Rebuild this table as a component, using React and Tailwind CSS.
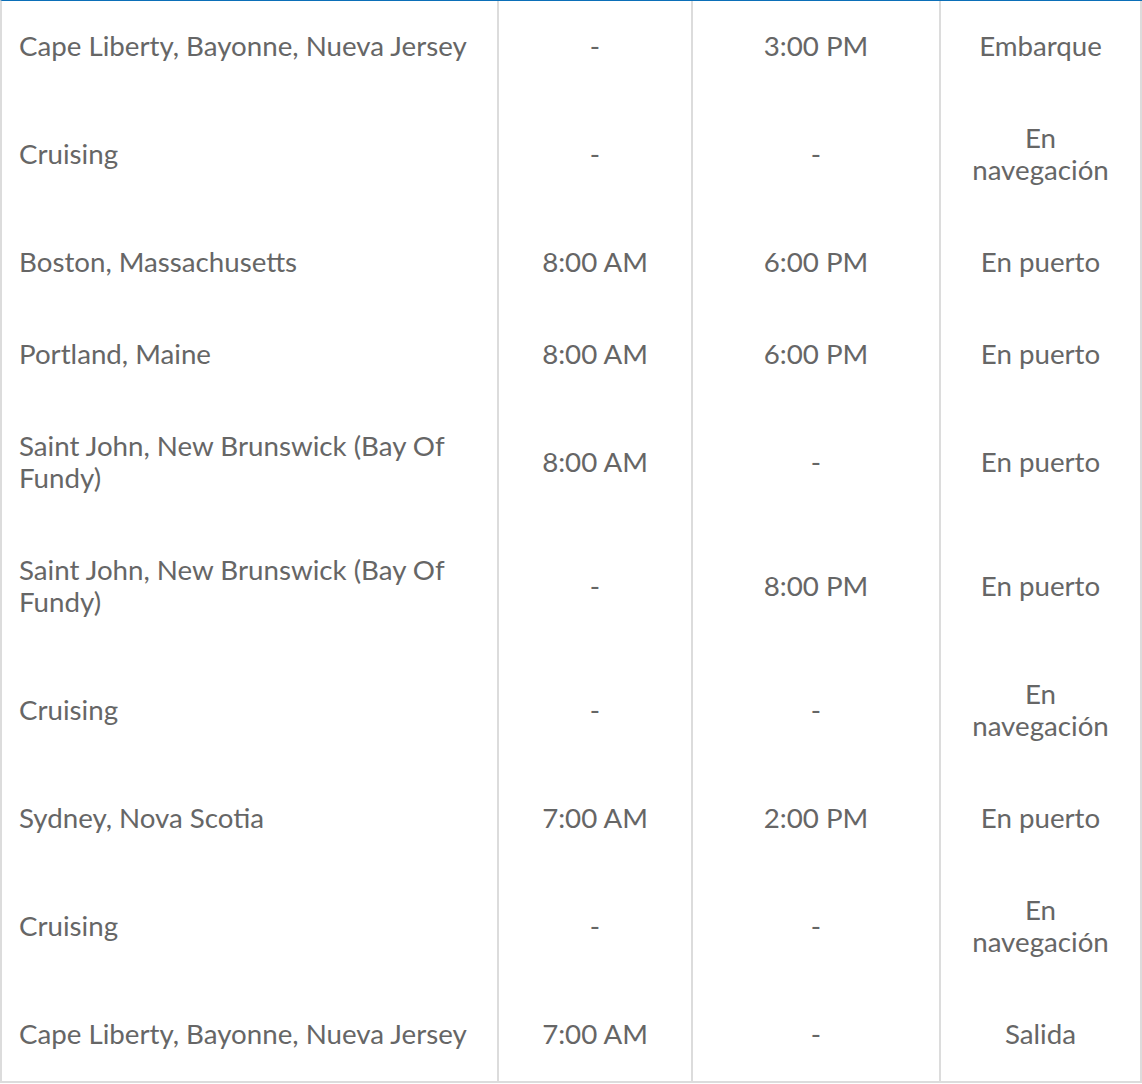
import React from "react"

const rows = [
  ["Cape Liberty, Bayonne, Nueva Jersey", "-", "3:00 PM", "Embarque"],
  ["Cruising", "-", "-", "En navegacio\u0301n"],
  ["Boston, Massachusetts", "8:00 AM", "6:00 PM", "En puerto"],
  ["Portland, Maine", "8:00 AM", "6:00 PM", "En puerto"],
  ["Saint John, New Brunswick (Bay Of Fundy)", "8:00 AM", "-", "En puerto"],
  ["Saint John, New Brunswick (Bay Of Fundy)", "-", "8:00 PM", "En puerto"],
  ["Cruising", "-", "-", "En navegacio\u0301n"],
  ["Sydney, Nova Scotia", "7:00 AM", "2:00 PM", "En puerto"],
  ["Cruising", "-", "-", "En navegacio\u0301n"],
  ["Cape Liberty, Bayonne, Nueva Jersey", "7:00 AM", "-", "Salida"],
]

export default function App() {
  return (
    <div className="w-[1142px] bg-white" style={{ fontFamily: "Lato, 'Open Sans', sans-serif" }}>
      <div className="border-t border-[#0b6fb8] border-l-2 border-l-[#dcdcdc] border-b-2 border-b-[#dcdcdc] grid grid-cols-[497px_194px_248px_201px] text-[27.7px] leading-[32px] text-[#666666]">
        {rows.map((r, i) => (
          <React.Fragment key={i}>
            {/* port */}
            <div className="border-r-2 border-[#dcdcdc] pl-[17px] pr-[17px] pt-[29px] pb-[31px] flex items-center">
              <span>{r[0]}</span>
            </div>
            <div className="border-r-2 border-[#dcdcdc] px-[17px] pt-[29px] pb-[31px] flex items-center justify-center text-center">
              {r[1]}
            </div>
            <div className="border-r-2 border-[#dcdcdc] px-[17px] pt-[29px] pb-[31px] flex items-center justify-center text-center">
              {r[2]}
            </div>
            <div className="border-r-2 border-[#dcdcdc] px-[17px] pt-[29px] pb-[31px] flex items-center justify-center text-center">
              {r[3]}
            </div>
          </React.Fragment>
        ))}
      </div>
    </div>
  )
}
